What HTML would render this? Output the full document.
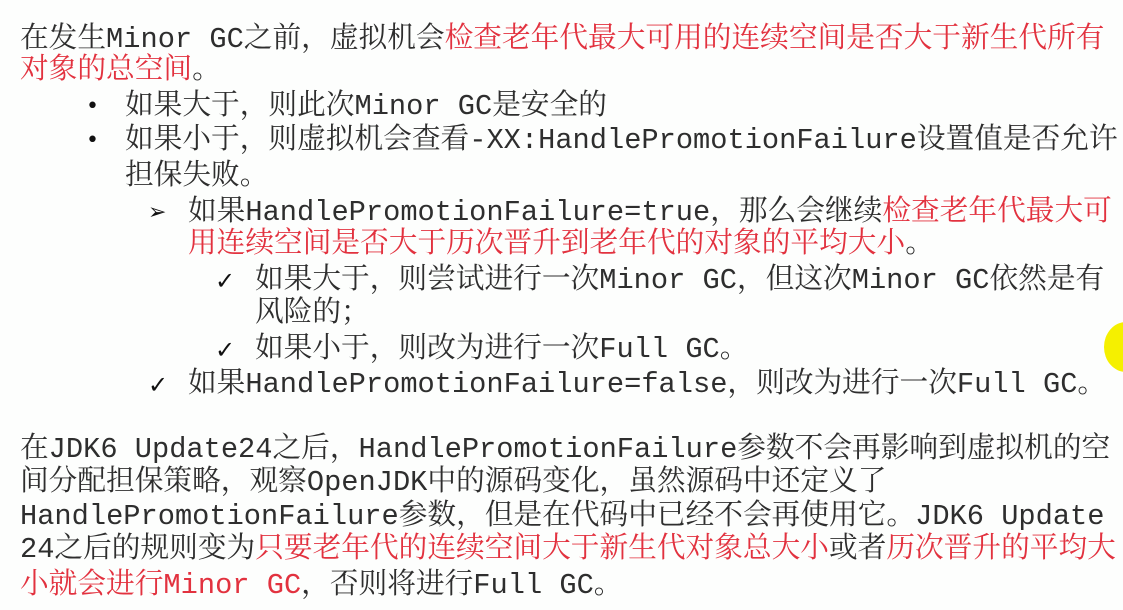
<!DOCTYPE html>
<html><head><meta charset="utf-8"><style>
body{margin:0;width:1123px;height:610px;background:#fdfefd;overflow:hidden;position:relative;font-family:"Liberation Mono","Noto Serif CJK SC",monospace;font-size:28.7px;color:#2e2e2e}
.l{position:absolute;white-space:nowrap;line-height:34px;height:34px}
.r{color:#e2323f}
.b{position:absolute;font-family:"DejaVu Sans",sans-serif;white-space:nowrap;line-height:34px;color:#111}
</style></head><body>
<div class="l" style="left:20px;top:23px">在发生Minor GC之前，虚拟机会<span class="r">检查老年代最大可用的连续空间是否大于新生代所有</span></div>
<div class="l" style="left:20px;top:54px"><span class="r">对象的总空间</span>。</div>
<div class="b" style="left:86px;top:90px;font-size:22px">•</div>
<div class="l" style="left:125px;top:90px">如果大于，则此次Minor GC是安全的</div>
<div class="b" style="left:86px;top:124px;font-size:22px">•</div>
<div class="l" style="left:125px;top:124px">如果小于，则虚拟机会查看-XX:HandlePromotionFailure设置值是否允许</div>
<div class="l" style="left:125px;top:160px">担保失败。</div>
<div class="b" style="left:148px;top:196px;font-size:22px">➢</div>
<div class="l" style="left:188px;top:196px">如果HandlePromotionFailure=true，那么会继续<span class="r">检查老年代最大可</span></div>
<div class="l" style="left:188px;top:228px"><span class="r">用连续空间是否大于历次晋升到老年代的对象的平均大小</span>。</div>
<div class="b" style="left:215px;top:264px;font-size:24px;font-weight:bold">✓</div>
<div class="l" style="left:255px;top:264px">如果大于，则尝试进行一次Minor GC，但这次Minor GC依然是有</div>
<div class="l" style="left:255px;top:297px">风险的；</div>
<div class="b" style="left:215px;top:333px;font-size:24px;font-weight:bold">✓</div>
<div class="l" style="left:255px;top:333px">如果小于，则改为进行一次Full GC。</div>
<div class="b" style="left:148px;top:368px;font-size:24px;font-weight:bold">✓</div>
<div class="l" style="left:188px;top:368px">如果HandlePromotionFailure=false，则改为进行一次Full GC。</div>
<div class="l" style="left:20px;top:433px">在JDK6 Update24之后，HandlePromotionFailure参数不会再影响到虚拟机的空</div>
<div class="l" style="left:20px;top:466px">间分配担保策略，观察OpenJDK中的源码变化，虽然源码中还定义了</div>
<div class="l" style="left:20px;top:500px">HandlePromotionFailure参数，但是在代码中已经不会再使用它。JDK6 Update</div>
<div class="l" style="left:20px;top:533px">24之后的规则变为<span class="r">只要老年代的连续空间大于新生代对象总大小</span>或者<span class="r">历次晋升的平均大</span></div>
<div class="l" style="left:20px;top:569px"><span class="r">小就会进行Minor GC</span>，否则将进行Full GC。</div>
<div style="position:absolute;left:1104px;top:322px;width:44px;height:50px;border-radius:50%;background:#f5f000"></div>
</body></html>
